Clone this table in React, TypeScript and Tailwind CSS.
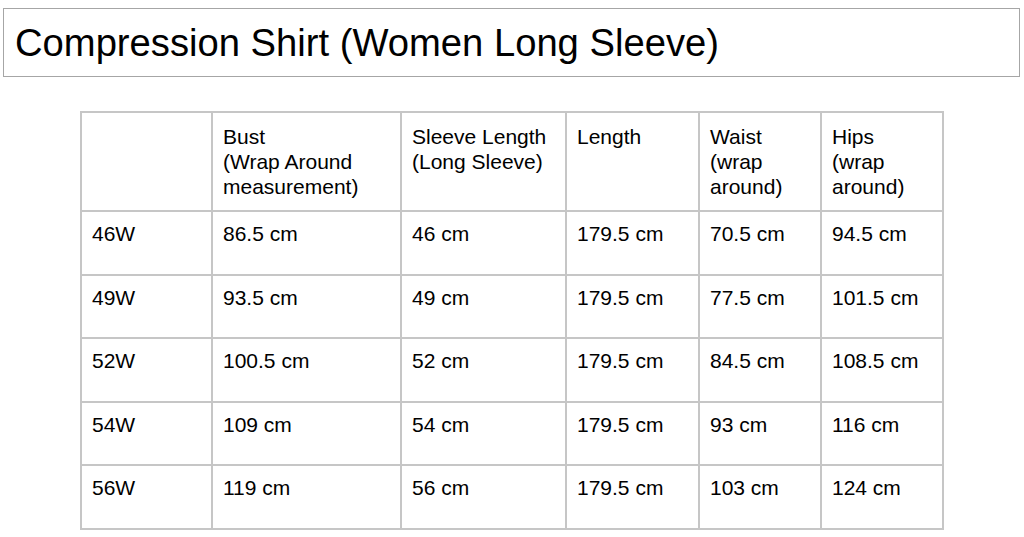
import React from "react";

const headers = [
  "",
  "Bust\n(Wrap Around\nmeasurement)",
  "Sleeve Length\n(Long Sleeve)",
  "Length",
  "Waist\n(wrap\naround)",
  "Hips\n(wrap\naround)",
];

const rows = [
  ["46W", "86.5 cm", "46 cm", "179.5 cm", "70.5 cm", "94.5 cm"],
  ["49W", "93.5 cm", "49 cm", "179.5 cm", "77.5 cm", "101.5 cm"],
  ["52W", "100.5 cm", "52 cm", "179.5 cm", "84.5 cm", "108.5 cm"],
  ["54W", "109 cm", "54 cm", "179.5 cm", "93 cm", "116 cm"],
  ["56W", "119 cm", "56 cm", "179.5 cm", "103 cm", "124 cm"],
];

const widths = ["w-[131px]", "w-[189px]", "w-[165px]", "w-[133px]", "w-[122px]", "w-[122px]"];

export default function App() {
  return (
    <div className="w-[1024px] h-[537px] bg-white overflow-hidden font-['Liberation_Sans',Arial,sans-serif] text-black">
      <div className="pt-[8px] pl-[3px]">
        <div className="w-[1017px] h-[69px] border-[1.5px] border-[#a6a6a6] pl-[11px] pt-[15px] text-[38.2px] leading-[38px]">
          Compression Shirt (Women Long Sleeve)
        </div>
      </div>
      <div className="pl-[80px] pt-[34px]">
        <table className="border-collapse table-fixed w-[863px] text-[21px] leading-[25px]">
          <colgroup>
            {widths.map((w, i) => (
              <col key={i} className={w} />
            ))}
          </colgroup>
          <thead>
            <tr className="h-[99px]">
              {headers.map((h, i) => (
                <th
                  key={i}
                  className="border-2 border-[#c6c6c6] align-top text-left font-normal pl-[10px] pt-[11px] whitespace-pre-line"
                >
                  {h}
                </th>
              ))}
            </tr>
          </thead>
          <tbody>
            {rows.map((r, ri) => (
              <tr key={ri} className="h-[63.6px]">
                {r.map((c, ci) => (
                  <td
                    key={ci}
                    className="border-2 border-[#c6c6c6] align-top text-left pl-[10px] pt-[9px]"
                  >
                    {c}
                  </td>
                ))}
              </tr>
            ))}
          </tbody>
        </table>
      </div>
    </div>
  );
}
